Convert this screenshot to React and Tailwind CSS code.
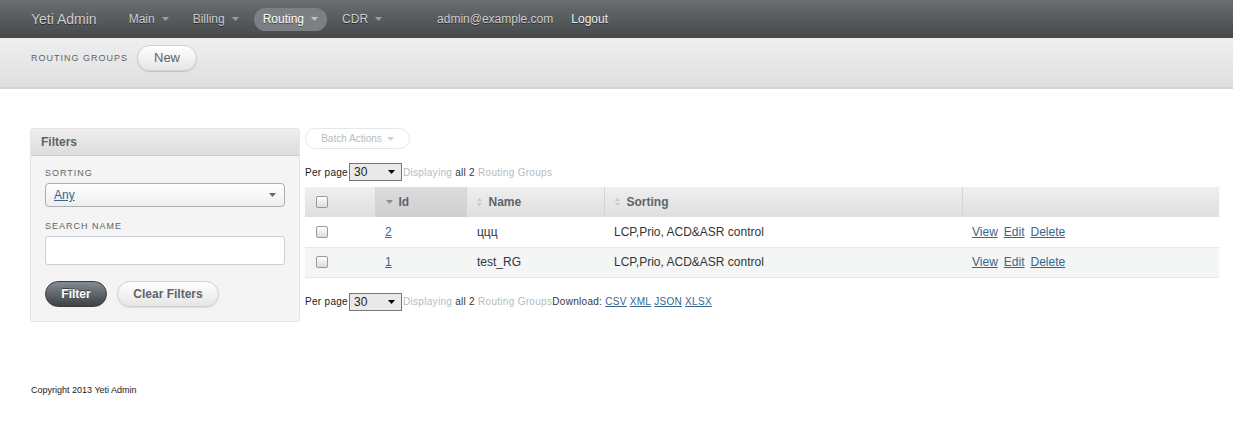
import React from "react";

const font = { fontFamily: '"Liberation Sans", Arial, sans-serif' };

const Caret = ({ className = "" }) => (
  <svg width="7" height="4" viewBox="0 0 7 4" className={className}>
    <path d="M0 0 L7 0 L3.5 4 Z" fill="currentColor" />
  </svg>
);

const SortBoth = () => (
  <svg width="5" height="8" viewBox="0 0 5 8" className="text-[#c4c8cb]">
    <path d="M0 3 L5 3 L2.5 0 Z M0 5 L5 5 L2.5 8 Z" fill="currentColor" />
  </svg>
);

const navItems = ["Main", "Billing", "Routing", "CDR"];

const rows = [
  { id: 2, name: "ццц", sorting: "LCP,Prio, ACD&ASR control" },
  { id: 1, name: "test_RG", sorting: "LCP,Prio, ACD&ASR control" },
];

const PerPage = ({ download }) => (
  <div className="flex h-[18px] items-center text-[10px] text-[#222]" style={{ letterSpacing: "0.3px" }}>
    <span>Per page</span>
    <div className="ml-px flex h-[18px] w-[53px] items-center justify-between border border-[#777] bg-[#e9e9e9] pl-1 pr-1.5 text-[12px]" style={{ letterSpacing: 0 }}>
      <span>30</span>
      <Caret className="text-black" />
    </div>
    <span className="ml-px text-[#b3bcc1]">Displaying</span>
    <span className="ml-[3px] text-[#323537]">all 2</span>
    <span className="ml-[3px] text-[#b3bcc1]">Routing Groups</span>
    {download && (
      <span className="text-[#323537]">
        Download:{" "}
        {["CSV", "XML", "JSON", "XLSX"].map((d) => (
          <a key={d} className="mr-[3px] text-[#35668f] underline">
            {d}
          </a>
        ))}
      </span>
    )}
  </div>
);

const Checkbox = () => (
  <div className="h-[12px] w-[12px] rounded-[2px] border border-[#9a9a9a] bg-gradient-to-b from-white to-[#dcdcdc]" />
);

const shadow = { textShadow: "0 1px 0 rgba(0,0,0,0.5)" };

export default function App() {
  return (
    <div className="min-h-[424px] w-[1233px] bg-white" style={font}>
      {/* top header */}
      <div className="flex h-[38px] items-center bg-gradient-to-b from-[#6a6e71] to-[#45494c] pl-[31px] text-[12px]">
        <span className="mr-[23px] text-[14px] text-[#cdcdcd]" style={shadow}>
          Yeti Admin
        </span>
        {navItems.map((n) => (
          <div
            key={n}
            className={
              "mr-[6px] flex h-[23px] items-center gap-[7px] rounded-full px-[9px] " +
              (n === "Routing" ? "bg-[#7c8084] text-white" : "text-[#cdcdcd]")
            }
            style={shadow}
          >
            {n}
            <Caret className={n === "Routing" ? "text-[#bfc2c4]" : "text-[#9a9ea1]"} />
          </div>
        ))}
        <span className="ml-[40px] text-[#cdcdcd]" style={shadow}>
          admin@example.com
        </span>
        <span className="ml-[18px] text-[#eeeeee]" style={shadow}>
          Logout
        </span>
      </div>

      {/* title bar */}
      <div className="flex h-[51px] items-start border-b-[2px] border-[#d4d4d4] bg-gradient-to-b from-[#efefef] to-[#dfdfdf] pl-[31px] pt-[7px]">
        <span className="mt-[7px] text-[9px] uppercase text-[#5e6469]" style={{ letterSpacing: "1px" }}>
          Routing Groups
        </span>
        <button className="ml-[9px] h-[26px] w-[60px] rounded-full border border-[#d0d0d0] bg-gradient-to-b from-white to-[#e6e6e6] text-[13px] text-[#5e6469] shadow-[0_1px_1px_rgba(0,0,0,0.15)]">
          New
        </button>
      </div>

      {/* content */}
      <div className="flex items-start pl-[30px] pt-[39px]">
        {/* sidebar */}
        <div className="w-[270px] overflow-hidden rounded-[3px] border border-[#e5e5e5] bg-[#f4f4f4]">
          <div className="flex h-[27px] items-center border-b border-[#cdcdcd] bg-gradient-to-b from-[#efefef] to-[#dcdcdc] pl-[10px] text-[12px] font-bold text-[#5e6469]">
            Filters
          </div>
          <div className="px-[14px] pb-[14px] pt-[12px]">
            <div className="text-[9px] uppercase leading-[11px] text-[#5e6469]" style={{ letterSpacing: "1px" }}>
              Sorting
            </div>
            <div className="mt-[4px] flex h-[24px] items-center justify-between rounded-[4px] border border-[#a8aeb3] bg-gradient-to-b from-white to-[#eeeeee] pl-[8px] pr-[8px]">
              <span className="text-[12px] text-[#35668f] underline">Any</span>
              <Caret className="text-[#666]" />
            </div>
            <div className="mt-[14px] text-[9px] uppercase leading-[11px] text-[#5e6469]" style={{ letterSpacing: "1px" }}>
              Search name
            </div>
            <div className="mt-[4px] h-[29px] rounded-[3px] border border-[#c9d0d6] bg-white" />
            <div className="mt-[16px] flex gap-[10px]">
              <button className="h-[26px] w-[62px] rounded-full border border-[#3a3e41] bg-gradient-to-b from-[#858b90] to-[#3e4246] text-[12px] font-bold text-white" style={{ textShadow: "0 -1px 0 rgba(0,0,0,0.5)" }}>
                Filter
              </button>
              <button className="h-[26px] w-[102px] rounded-full border border-[#d0d0d0] bg-gradient-to-b from-white to-[#e6e6e6] text-[12px] font-bold text-[#5e6469] shadow-[0_1px_1px_rgba(0,0,0,0.1)]">
                Clear Filters
              </button>
            </div>
          </div>
        </div>

        {/* main */}
        <div className="ml-[5px] w-[914px]">
          <button className="flex h-[21px] w-[105px] items-center justify-center gap-[5px] rounded-full border border-[#e6e6e6] bg-white text-[10px] leading-none text-[#b3bcc1]">
            Batch Actions <Caret className="text-[#d0d4d6]" />
          </button>
          <div className="mt-[14px]">
            <PerPage />
          </div>
          <table className="mt-[6px] w-full border-collapse text-[12px]">
            <thead>
              <tr className="h-[30px] bg-gradient-to-b from-[#efefef] to-[#dfdfdf] text-left font-bold text-[#5e6469] shadow-[0_1px_1px_rgba(0,0,0,0.1)]">
                <th className="w-[70px] border-r border-[#d4d4d4] pl-[11px]">
                  <Checkbox />
                </th>
                <th className="w-[91px] border-r border-[#d4d4d4] bg-gradient-to-b from-[#dcdcdc] to-[#cfcfcf] pl-[10px]">
                  <span className="flex items-center gap-[6px]">
                    <Caret className="text-[#8c9094]" /> Id
                  </span>
                </th>
                <th className="w-[138px] border-r border-[#d4d4d4] pl-[10px]">
                  <span className="flex items-center gap-[7px]">
                    <SortBoth /> Name
                  </span>
                </th>
                <th className="w-[358px] border-r border-[#d4d4d4] pl-[10px]">
                  <span className="flex items-center gap-[7px]">
                    <SortBoth /> Sorting
                  </span>
                </th>
                <th />
              </tr>
            </thead>
            <tbody className="text-[#323537]">
              {rows.map((r, i) => (
                <tr key={r.id} className={"h-[30px] border-b border-[#e8e8e8] " + (i % 2 ? "bg-[#f4f5f5]" : "bg-white")}>
                  <td className="pl-[11px]">
                    <Checkbox />
                  </td>
                  <td className="pl-[10px]">
                    <a className="text-[#35668f] underline">{r.id}</a>
                  </td>
                  <td className="pl-[11px]">{r.name}</td>
                  <td className="pl-[10px]">{r.sorting}</td>
                  <td className="pl-[10px]">
                    <a className="mr-[6px] text-[#35668f] underline">View</a>
                    <a className="mr-[6px] text-[#35668f] underline">Edit</a>
                    <a className="text-[#35668f] underline">Delete</a>
                  </td>
                </tr>
              ))}
            </tbody>
          </table>
          <div className="mt-[15px]">
            <PerPage download />
          </div>
        </div>
      </div>

      {/* footer */}
      <div className="mt-[62px] pl-[31px] text-[9px] text-[#222]">Copyright 2013 Yeti Admin</div>
    </div>
  );
}
